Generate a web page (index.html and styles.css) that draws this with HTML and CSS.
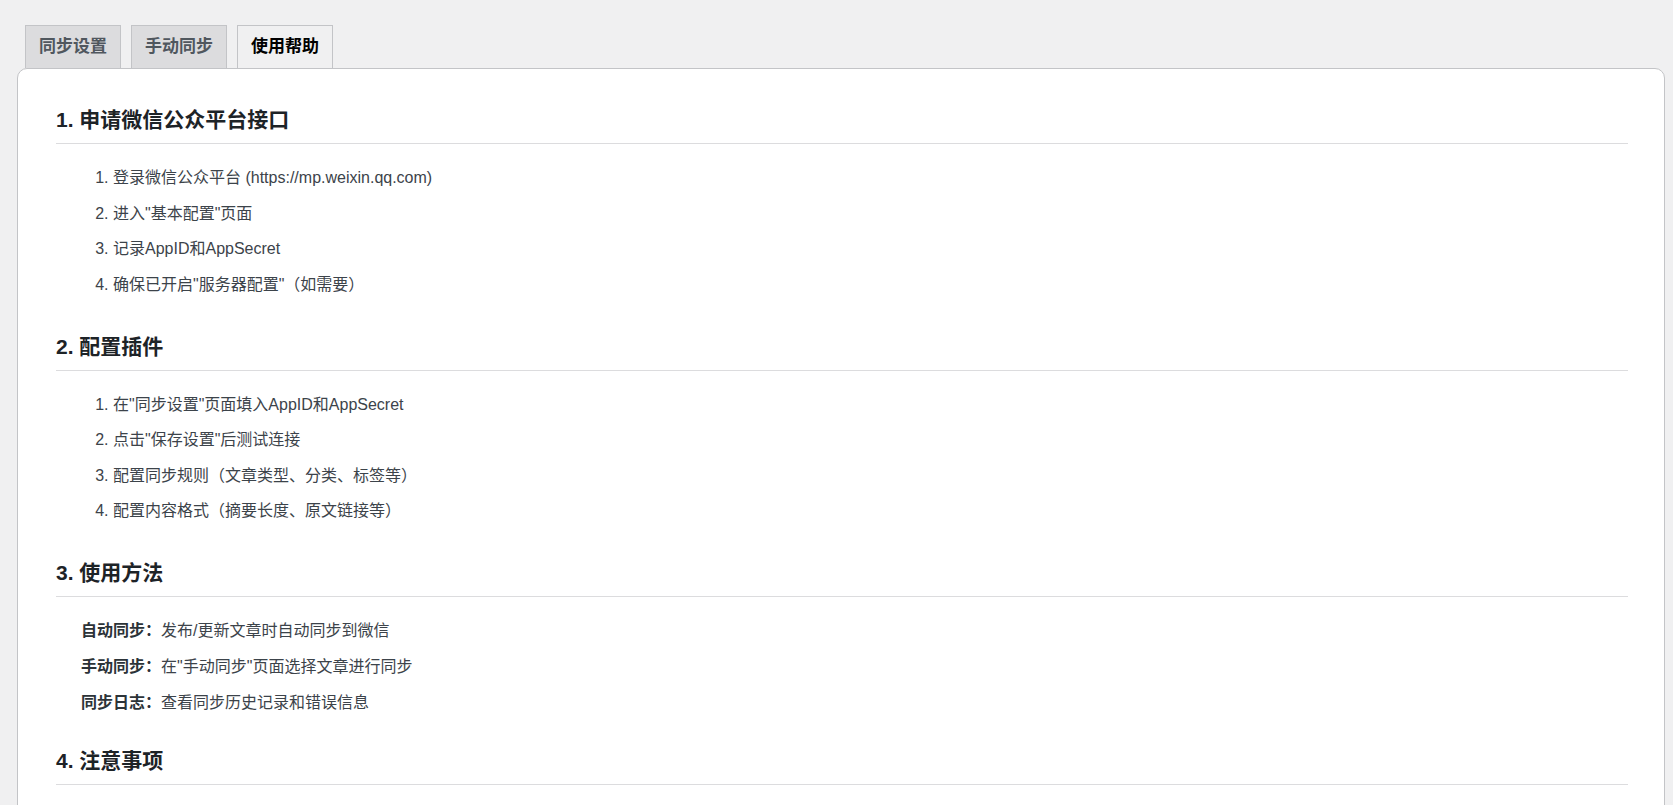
FILE: index.html
```html
<!DOCTYPE html>
<html lang="zh-CN">
<head>
  <meta charset="UTF-8">
  <title>使用帮助</title>
  <link rel="stylesheet" href="styles.css">
</head>
<body>
  <div class="wrap">
    <nav class="tabs">
      <a class="tab" href="#">同步设置</a>
      <a class="tab" href="#">手动同步</a>
      <a class="tab tab-active" href="#">使用帮助</a>
    </nav>

    <div class="panel">
      <h2>1. 申请微信公众平台接口</h2>
      <ol>
        <li>登录微信公众平台 (https://mp.weixin.qq.com)</li>
        <li>进入"基本配置"页面</li>
        <li>记录AppID和AppSecret</li>
        <li>确保已开启"服务器配置"（如需要）</li>
      </ol>

      <h2>2. 配置插件</h2>
      <ol>
        <li>在"同步设置"页面填入AppID和AppSecret</li>
        <li>点击"保存设置"后测试连接</li>
        <li>配置同步规则（文章类型、分类、标签等）</li>
        <li>配置内容格式（摘要长度、原文链接等）</li>
      </ol>

      <h2>3. 使用方法</h2>
      <div class="usage">
        <p><strong>自动同步：</strong>发布/更新文章时自动同步到微信</p>
        <p><strong>手动同步：</strong>在"手动同步"页面选择文章进行同步</p>
        <p><strong>同步日志：</strong>查看同步历史记录和错误信息</p>
      </div>

      <h2 class="notes">4. 注意事项</h2>
    </div>
  </div>
</body>
</html>
```

FILE: styles.css
```css
html, body {
  margin: 0;
  overflow: hidden;
}
body {
  background: #f0f0f1;
  color: #3c434a;
  font-family: "Liberation Sans", "Noto Sans CJK SC", sans-serif;
  font-size: 16px;
}

.wrap {
  padding: 25px 8px 0 17px;
}

.tabs {
  display: flex;
  gap: 10px;
  margin-left: 8px;
}
.tab {
  display: block;
  padding: 0 13px;
  line-height: 42px;
  font-size: 17px;
  font-weight: 700;
  color: #50575e;
  background: #dcdcde;
  border: 1px solid #c3c4c7;
  border-bottom: 0;
  text-decoration: none;
}
.tab-active {
  background: #f0f0f1;
  color: #000;
}

.panel {
  background: #fff;
  border: 1px solid #c3c4c7;
  border-radius: 10px;
  padding: 1px 36px 40px 38px;
  min-height: 800px;
}

.panel h2 {
  margin: 36px 0 0;
  padding-bottom: 9px;
  border-bottom: 1px solid #dcdcde;
  font-size: 21px;
  line-height: 28px;
  font-weight: 700;
  color: #1d2327;
}
.panel h2.notes {
  margin-top: 32px;
}

.panel ol {
  margin: 22px 0 0;
  padding-left: 57px;
}
.panel li {
  line-height: 24px;
  margin-bottom: 11.5px;
}

.usage {
  margin-top: 22px;
  padding-left: 25px;
}
.usage p {
  margin: 0 0 12px;
  line-height: 24px;
}
.usage strong {
  color: #2c3338;
}
```
